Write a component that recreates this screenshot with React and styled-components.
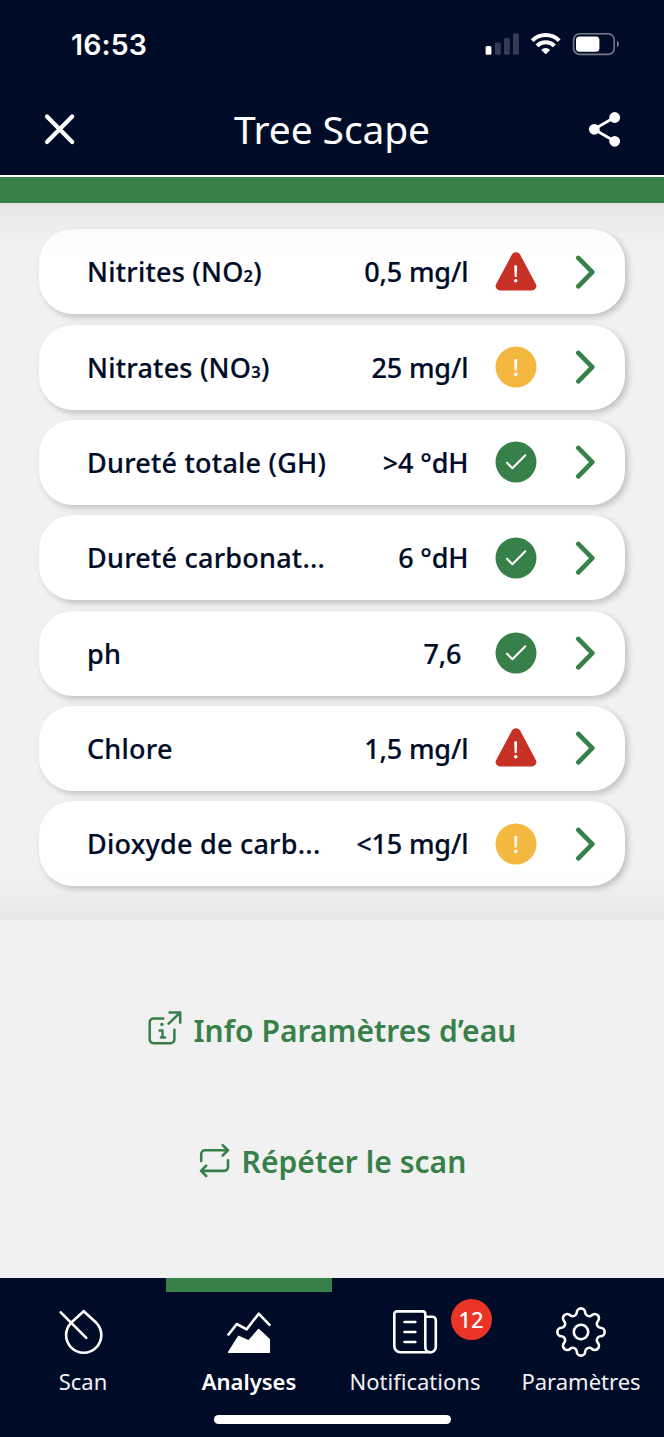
import React from "react";
import styled, { createGlobalStyle } from "styled-components";

const NAVY = "#000c27";
const GREEN = "#388049";
const RED = "#c73024";
const AMBER = "#f4b740";

const GlobalStyle = createGlobalStyle`
  *, *::before, *::after { box-sizing: border-box; }
  body { margin: 0; background: #f1f1f1; font-family: "Noto Sans", "Open Sans", sans-serif; }
  button { border: 0; padding: 0; margin: 0; background: none; font: inherit; color: inherit; }
  svg { display: block; flex: none; }
`;

const Screen = styled.div`
  width: 664px;
  height: 1437px;
  display: flex;
  flex-direction: column;
  background: #f1f1f1;
  overflow: hidden;
`;

const StatusBar = styled.div`
  height: 88px;
  flex: none;
  display: flex;
  justify-content: space-between;
  padding: 0 44px 0 71px;
  background: ${NAVY};
  color: #fff;
`;

const Clock = styled.time`
  font: 600 28.5px/34px "Inter", sans-serif;
  letter-spacing: 0.1px;
  padding-top: 28px;
`;

const StatusIcons = styled.div`
  display: flex;
  padding-top: 32px;
`;

const Header = styled.header`
  height: 87.3px;
  flex: none;
  display: grid;
  grid-template-columns: 120px 1fr 120px;
  justify-items: center;
  padding-top: 17px;
  background: ${NAVY};
  color: #fff;
`;

const Title = styled.h1`
  margin: -1px 0 0;
  font-size: 39px;
  line-height: 50px;
  font-weight: 400;
  letter-spacing: -0.12px;
  white-space: nowrap;
`;

const HeaderButton = styled.button`
  width: 48px;
  height: 48px;
`;

const Accent = styled.div`
  height: 27.4px;
  flex: none;
  border-top: 2.4px solid #fff;
  background: ${GREEN};
`;

const Results = styled.section`
  position: relative;
  flex: none;
  height: 717.5px;
  padding: 26.6px 39px 0;
  display: flex;
  flex-direction: column;
  gap: 10.33px;
  background: #f1f1f1;

  &::before, &::after {
    content: "";
    position: absolute;
    left: 0;
    right: 0;
    height: 56px;
    pointer-events: none;
  }
  &::before { top: 0; background: linear-gradient(rgba(0,0,0,0.045), rgba(0,0,0,0.012) 50%, transparent); }
  &::after { bottom: 0; background: linear-gradient(transparent, rgba(0,0,0,0.012) 50%, rgba(0,0,0,0.04)); }
`;

const Row = styled.button`
  width: 586px;
  height: 85px;
  flex: none;
  display: grid;
  grid-template-columns: 1fr auto 42px 59px;
  align-items: center;
  padding: 0 29px 0 48px;
  border-radius: 34px;
  background: #fff;
  box-shadow: 3px 3px 6px rgba(0, 0, 0, 0.2);
  color: ${NAVY};
  font-size: 27px;
  font-weight: 500;
  -webkit-text-stroke: 0.2px ${NAVY};
  line-height: 36px;
  text-align: left;
  white-space: nowrap;
`;

const Name = styled.span`
  padding-top: 1px;
  letter-spacing: 0.23px;
`;

const Sub = styled.span`
  font-size: 16.5px;
  font-weight: 600;
  line-height: 0;
`;

const Value = styled.span`
  padding-top: 1px;
  letter-spacing: -0.15px;
  margin-right: ${(p) => (p.$unitless ? 33.7 : 26.7)}px;
`;

const RowChevron = styled.svg`
  margin-left: 37.8px;
`;

const Links = styled.section`
  flex: 1;
  display: flex;
  flex-direction: column;
  align-items: center;
  padding-top: 88.6px;
  gap: 87px;
`;

const LinkButton = styled.button`
  display: flex;
  align-items: center;
  gap: 10px;
  height: 44px;
  color: ${GREEN};
  font-size: 30px;
  font-weight: 600;
  line-height: 44px;
  letter-spacing: 0.05px;
  white-space: nowrap;

  svg { margin-bottom: ${(p) => p.$lift}px; }
`;

const TabBar = styled.nav`
  height: 158.7px;
  flex: none;
  display: flex;
  flex-direction: column;
  align-items: center;
  background: ${NAVY};
  color: #fff;
`;

const Tabs = styled.div`
  width: 100%;
  height: 136.5px;
  display: grid;
  grid-template-columns: repeat(4, 1fr);
`;

const Tab = styled.button`
  position: relative;
  display: flex;
  flex-direction: column;
  align-items: center;
  border-top: 14px solid ${(p) => (p.$active ? GREEN : "transparent")};
  padding-top: 10px;
  font-size: 22px;
  line-height: 30px;
  font-weight: ${(p) => (p.$active ? 600 : 400)};
  letter-spacing: 0;
  color: ${(p) => (p.$active ? "#fff" : "#f0f1f3")};
`;

const TabLabel = styled.span`
  margin-top: 4px;
`;

const Badge = styled.span`
  position: absolute;
  left: 118.5px;
  top: 7px;
  width: 41px;
  height: 41px;
  border-radius: 50%;
  background: #ea3425;
  color: #fff;
  font-size: 22px;
  font-weight: 500;
  line-height: 41px;
  text-align: center;
`;

const HomeIndicator = styled.div`
  width: 237px;
  height: 9px;
  border-radius: 5px;
  background: #fff;
`;

const CellularIcon = () => (
  <svg width="36" height="24" viewBox="0 0 36 24" fill="#fff">
    <rect x="1.6" y="14" width="5.8" height="8.7" rx="1.5" />
    <g opacity="0.2">
      <rect x="11" y="10.4" width="5.8" height="12.3" rx="1.5" />
      <rect x="20" y="6" width="5.8" height="16.7" rx="1.5" />
      <rect x="29" y="1.3" width="5.8" height="21.4" rx="1.5" />
    </g>
  </svg>
);

const WifiIcon = () => (
  <svg width="50" height="24" viewBox="0 0 50 24" fill="none" stroke="#fff" strokeWidth="4">
    <path d="M12.2 8.6a19 19 0 0 1 27 0" />
    <path d="M17 13.9a12.3 12.3 0 0 1 17.4 0" />
    <path d="M25.7 22.3l-4.5-4.4a6.5 6.5 0 0 1 9 0z" fill="#fff" stroke="none" />
  </svg>
);

const BatteryIcon = () => (
  <svg width="50" height="24" viewBox="0 0 50 24">
    <rect x="3.6" y="1.8" width="40.6" height="20.6" rx="6" fill="none" stroke="#757a87" strokeWidth="1.6" />
    <rect x="6" y="4.4" width="23.4" height="15.4" rx="3.6" fill="#fff" />
    <path d="M47 8.8c2.4 1.5 2.4 4.7 0 6.3z" fill="#858994" />
  </svg>
);

const CloseIcon = () => (
  <svg width="48" height="48" viewBox="0 0 48 48" stroke="#fff" strokeWidth="4.2" strokeLinecap="round">
    <path d="M11 11.6 36.2 37M36.2 11.6 11 37" />
  </svg>
);

const ShareIcon = () => (
  <svg width="48" height="48" viewBox="0 0 48 48" fill="#fff">
    <path d="M34.7 12.3 14 24.3 34.7 36.3" fill="none" stroke="#fff" strokeWidth="2.8" />
    <circle cx="14.3" cy="24.3" r="5.4" />
    <circle cx="34.7" cy="12.5" r="5.4" />
    <circle cx="34.7" cy="36.3" r="5.4" />
  </svg>
);

const Exclamation = ({ y = 0 }) => (
  <g fill="#fff" transform={`translate(-0.3 ${y})`}>
    <path d="M19.5 14.2a1.3 1.3 0 0 1 1.3-1.3h.4a1.3 1.3 0 0 1 1.3 1.3L22 24.6h-2z" />
    <circle cx="21" cy="28.4" r="1.8" />
  </g>
);

const StatusIcon = ({ status }) => (
  <svg width="42" height="42" viewBox="0 0 42 42">
    {status === "alert" && (
      <>
        <path d="M16.9 3.6a4.7 4.7 0 0 1 8.2 0L40.8 32.9a4.4 4.4 0 0 1-3.9 6.6H5.1a4.4 4.4 0 0 1-3.9-6.6z" fill={RED} />
        <Exclamation y={1.3} />
      </>
    )}
    {status === "warn" && (
      <>
        <circle cx="21" cy="21" r="20.5" fill={AMBER} />
        <Exclamation />
      </>
    )}
    {status === "ok" && (
      <>
        <circle cx="21" cy="21" r="20.5" fill={GREEN} />
        <path d="M12 21.7 17.4 27.3 30.3 14.3" fill="none" stroke="#fff" strokeWidth="2" strokeLinecap="round" strokeLinejoin="round" />
      </>
    )}
  </svg>
);

const Chevron = () => (
  <RowChevron width="22" height="36" viewBox="0 0 22 36" fill="none" stroke={GREEN} strokeWidth="4.7" strokeLinecap="round" strokeLinejoin="round">
    <path d="M3.3 3.9 17.3 18.1 3.3 32.3" />
  </RowChevron>
);

const InfoIcon = () => (
  <svg width="36" height="36" viewBox="0 0 36 36" fill="none" stroke={GREEN} strokeWidth="2.5" strokeLinecap="round" strokeLinejoin="round">
    <path d="M16.3 9.6H6.4a3.7 3.7 0 0 0-3.7 3.7v17.3a3.7 3.7 0 0 0 3.7 3.7h17.3a3.7 3.7 0 0 0 3.7-3.7v-9.9" />
    <path d="M21.6 14.6 33.2 3.6M22.6 3.6h10.6v10.2" />
    <path d="M12.6 21.6h2.9v6.7M13.9 28.5h4.2" />
    <circle cx="14.9" cy="15.4" r="1.7" fill={GREEN} stroke="none" />
  </svg>
);

const RepeatIcon = () => (
  <svg width="34" height="36" viewBox="0 0 34 36" fill="none" stroke={GREEN} strokeWidth="2.6" strokeLinecap="round" strokeLinejoin="round">
    <path d="M3.2 18v-6.9a3.8 3.8 0 0 1 3.8-3.8h23M24.6 2.1 30 7.3 24.6 12.6" />
    <path d="M30 17.2v6.9a3.8 3.8 0 0 1-3.8 3.8h-23M8.2 22.6 3 27.9 8.2 33" />
  </svg>
);

const TabIcon = ({ children }) => (
  <svg width="60" height="60" viewBox="0 0 60 60" fill="none" stroke="#fff" strokeWidth="2.6" strokeLinecap="round" strokeLinejoin="round">
    {children}
  </svg>
);

const polar = (r, deg) => [30 + r * Math.cos((deg * Math.PI) / 180), 30 + r * Math.sin((deg * Math.PI) / 180)];

// Cog outline: eight convex teeth joined by concave arcs.
const cogPath = (() => {
  const tooth = 4.2;
  const notch = 4;
  const t = tooth / (tooth + notch);
  const join = (toothAngle, notchAngle) => {
    const c = polar(19, toothAngle);
    const v = polar(21.5, notchAngle);
    return [c[0] + (v[0] - c[0]) * t, c[1] + (v[1] - c[1]) * t].map((n) => n.toFixed(2)).join(" ");
  };
  let d = `M${join(0, -22.5)}`;
  for (let a = 0; a < 360; a += 45) {
    d += `A${tooth} ${tooth} 0 0 1 ${join(a, a + 22.5)}`;
    d += `A${notch} ${notch} 0 0 0 ${join(a + 45, a + 22.5)}`;
  }
  return `${d}Z`;
})();

const results = [
  { name: <>Nitrites (NO<Sub>2</Sub>)</>, value: "0,5 mg/l", status: "alert" },
  { name: <>Nitrates (NO<Sub>3</Sub>)</>, value: "25 mg/l", status: "warn" },
  { name: "Dureté totale (GH)", value: ">4 °dH", status: "ok" },
  { name: "Dureté carbonat...", value: "6 °dH", status: "ok" },
  { name: "ph", value: "7,6", status: "ok", unitless: true },
  { name: "Chlore", value: "1,5 mg/l", status: "alert" },
  { name: "Dioxyde de carb...", value: "<15 mg/l", status: "warn" },
];

export default function App() {
  return (
    <Screen>
      <GlobalStyle />
      <StatusBar>
        <Clock>16:53</Clock>
        <StatusIcons>
          <CellularIcon />
          <WifiIcon />
          <BatteryIcon />
        </StatusIcons>
      </StatusBar>
      <Header>
        <HeaderButton aria-label="Fermer"><CloseIcon /></HeaderButton>
        <Title>Tree Scape</Title>
        <HeaderButton aria-label="Partager"><ShareIcon /></HeaderButton>
      </Header>
      <Accent />
      <Results>
        {results.map((r, i) => (
          <Row key={i}>
            <Name>{r.name}</Name>
            <Value $unitless={r.unitless}>{r.value}</Value>
            <StatusIcon status={r.status} />
            <Chevron />
          </Row>
        ))}
      </Results>
      <Links>
        <LinkButton $lift={8}><InfoIcon />Info Paramètres d’eau</LinkButton>
        <LinkButton $lift={2}><RepeatIcon />Répéter le scan</LinkButton>
      </Links>
      <TabBar>
        <Tabs>
          <Tab>
            <TabIcon>
              <path d="M30.7 9.2 18.1 20.8a17.6 17.6 0 1 0 25.2 0z" />
              <path d="M7.7 10.4 33.3 35.9" />
            </TabIcon>
            <TabLabel>Scan</TabLabel>
          </Tab>
          <Tab $active>
            <TabIcon>
              <path d="M9.5 32.5 17.8 22 27.7 27.3 39.7 11.7 50.5 22.8" />
              <path d="M9.6 50.3 19.6 34.5 29.6 38.9 39.7 27.5 50.3 37.5V50.3z" fill="#fff" strokeWidth="1.5" />
            </TabIcon>
            <TabLabel>Analyses</TabLabel>
          </Tab>
          <Tab>
            <TabIcon>
              <path d="M40.3 45.3V12a2.6 2.6 0 0 0-2.6-2.6H11.9A2.6 2.6 0 0 0 9.3 12v32.3a6 6 0 0 0 6 6h30.3" />
              <path d="M40.3 14.8h7.2a3.3 3.3 0 0 1 3.3 3.3v26.7a5.3 5.3 0 0 1-5.3 5.5c-3 0-5.2-2-5.2-5" />
              <path d="M19.5 20h10.8M19.5 30h10.8M19.5 40h10.8" />
            </TabIcon>
            <TabLabel>Notifications</TabLabel>
            <Badge>12</Badge>
          </Tab>
          <Tab>
            <TabIcon>
              <path d={cogPath} />
              <circle cx="30" cy="30" r="7.2" />
            </TabIcon>
            <TabLabel>Paramètres</TabLabel>
          </Tab>
        </Tabs>
        <HomeIndicator />
      </TabBar>
    </Screen>
  );
}
